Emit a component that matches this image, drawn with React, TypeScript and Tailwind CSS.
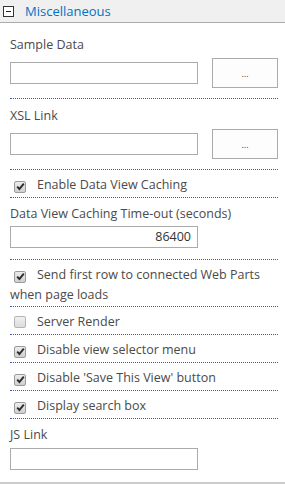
import React from 'react';

const font = { fontFamily: '"Open Sans", "Noto Sans", sans-serif' };

function Box({ checked }: { checked: boolean }) {
  return (
    <span
      className={`inline-flex items-center justify-center align-[-2px] w-[12px] h-[12px] rounded-[2px] border ${
        checked ? 'border-[#9a9a9a] bg-gradient-to-b from-[#ececec] to-[#cfcfcf]' : 'border-[#b4b4b4] bg-gradient-to-b from-[#f0f0f0] to-[#dcdcdc]'
      }`}
    >
      {checked && (
        <svg width="9" height="9" viewBox="0 0 9 9">
          <path d="M1.2 4.6 L3.4 7 L7.8 1.6" fill="none" stroke="#2b2b2b" strokeWidth="1.9" />
        </svg>
      )}
    </span>
  );
}

function CheckRow({ checked, children }: { checked: boolean; children: React.ReactNode }) {
  return (
    <div className="pt-[5px] pb-[2px] border-b border-dotted border-[#3a5bc7] leading-[20px]">
      <span className="ml-[4px] mr-[11px]">
        <Box checked={checked} />
      </span>
      {children}
    </div>
  );
}

function Picker() {
  return (
    <div className="mt-[3px] flex items-center justify-between h-[30px]">
      <div className="w-[188px] h-[22px] border border-[#ababab] bg-white" />
      <div className="w-[66px] h-[30px] border border-[#ababab] bg-[#fdfdfd] flex items-center justify-center text-[9px] leading-none text-[#444]">
        ...
      </div>
    </div>
  );
}

export default function App() {
  return (
    <div className="w-[285px] h-[484px] bg-white text-[12.5px] text-[#4a4a4a] overflow-hidden" style={font}>
      <div className="h-[23px] bg-[#f0f0f0] border-b border-[#ababab] flex items-center">
        <span className="ml-[3px] w-[11px] h-[11px] border border-[#333] bg-white flex items-center justify-center">
          <span className="block w-[5px] h-[1px] bg-[#222]" />
        </span>
        <span className="ml-[11px] text-[13px] text-[#0072c6] leading-none">Miscellaneous</span>
      </div>

      <div className="pl-[10px] pr-[7px] border-b-2 border-[#cccccc] pb-[12px]">
        <div className="pt-[12px] pb-[10px] border-b border-dotted border-[#3a5bc7]">
          <div className="leading-[20px]">Sample Data</div>
          <Picker />
        </div>

        <div className="pt-[7px] pb-[10px] border-b border-dotted border-[#3a5bc7]">
          <div className="leading-[20px]">XSL Link</div>
          <Picker />
        </div>

        <CheckRow checked>Enable Data View Caching</CheckRow>

        <div className="pt-[6px] pb-[11px] border-b border-dotted border-[#3a5bc7]">
          <div className="leading-[20px]">Data View Caching Time-out (seconds)</div>
          <div className="mt-[2px] w-[188px] h-[22px] border border-[#ababab] bg-white flex items-center justify-end pr-[6px] text-[#333]">
            86400
          </div>
        </div>

        <div className="pt-[5px] pb-[1px] border-b border-dotted border-[#3a5bc7] leading-[20px]">
          <span className="ml-[4px] mr-[11px]">
            <Box checked />
          </span>
          Send first row to connected Web Parts
          <br />
          when page loads
        </div>

        <CheckRow checked={false}>Server Render</CheckRow>
        <CheckRow checked>Disable view selector menu</CheckRow>
        <CheckRow checked>Disable 'Save This View' button</CheckRow>
        <CheckRow checked>Display search box</CheckRow>

        <div className="pt-[6px]">
          <div className="leading-[20px]">JS Link</div>
          <div className="mt-[3px] w-[188px] h-[22px] border border-[#ababab] bg-white" />
        </div>
      </div>
    </div>
  );
}
